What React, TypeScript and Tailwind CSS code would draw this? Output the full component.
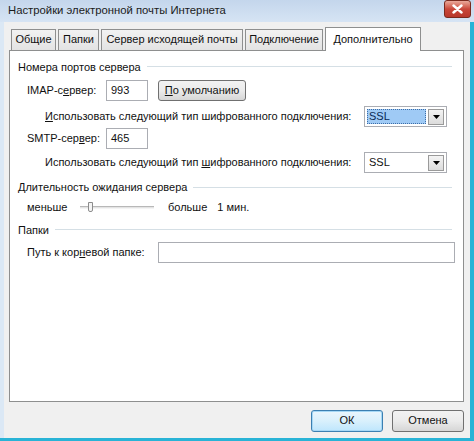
import React from 'react';

const tabs = [
  { t: 'Общие', w: 'w-[45px]' },
  { t: 'Папки', w: 'w-[41px]' },
  { t: 'Сервер исходящей почты', w: 'w-[142px]' },
  { t: 'Подключение', w: 'w-[78px]' },
];

const Legend = ({ children }: { children: React.ReactNode }) => (
  <div className="flex items-center gap-[6px] pr-[4px] whitespace-nowrap">
    <span>{children}</span>
    <div className="flex-1 h-px bg-[#d5dfe5]" />
  </div>
);

const Combo = ({ selected }: { selected?: boolean }) => (
  <div className="w-[83px] h-[21px] shrink-0 border border-[#abadb3] bg-white flex items-center p-[2px]">
    <div
      className={
        selected
          ? 'flex-1 h-full bg-[#9fcaf5] border border-dotted border-[#3d6ea8] pl-[1px] flex items-center text-[#0a2a55]'
          : 'flex-1 h-full pl-[2px] flex items-center'
      }
    >
      SSL
    </div>
    <div className="w-[16px] h-[16px] ml-[2px] border border-[#9a9a9a] bg-gradient-to-b from-[#f4f4f4] to-[#dcdcdc] flex items-center justify-center">
      <svg width="7" height="4" viewBox="0 0 7 4">
        <path d="M0 0h7L3.5 4z" fill="#000" />
      </svg>
    </div>
  </div>
);

const TextBox = ({ value, className }: { value?: string; className: string }) => (
  <div className={`h-[21px] shrink-0 border border-[#abadb3] bg-white flex items-center pl-[4px] ${className}`}>{value}</div>
);

export default function App() {
  return (
    <div
      className="w-[474px] h-[441px] bg-[#dbe8f5] overflow-hidden text-[11px] text-[#111] flex flex-col whitespace-nowrap"
      style={{ fontFamily: '"Segoe UI", "Liberation Sans", Arial, sans-serif' }}
    >
      {/* Title bar */}
      <div className="h-[25px] flex items-center justify-between pl-[8px] pr-[3px] bg-gradient-to-b from-[#c4d6ec] to-[#d6e4f4]">
        <span className="text-[11.3px] text-[#1b1b1b]">Настройки электронной почты Интернета</span>
        <div className="w-[27px] h-[18px] mt-[-4px] rounded-[3px] border border-[#7a2a1e] bg-gradient-to-b from-[#e9a99b] via-[#c9473a] to-[#b8382c] flex items-center justify-center">
          <svg width="11" height="10" viewBox="0 0 11 10">
            <path d="M1.5 1.5l8 7M9.5 1.5l-8 7" stroke="#fff" strokeWidth="2.4" strokeLinecap="round" />
          </svg>
        </div>
      </div>

      {/* Body */}
      <div className="flex-1 flex ml-[4px]">
        <div className="flex-1 bg-[#f0f0f0] flex flex-col pl-[5px] pr-[6px] pb-[6px]">
          {/* Tabs */}
          <div className="flex items-end h-[25px] pl-[2px] mt-[3px]">
            {tabs.map(({ t, w }) => (
              <div
                key={t}
                className={`h-[21px] ${w} shrink-0 mr-[2px] border border-b-0 border-[#8e8f8f] bg-gradient-to-b from-[#f2f2f2] to-[#e3e3e3] flex items-center justify-center`}
              >
                {t}
              </div>
            ))}
            <div className="h-[24px] w-[96px] shrink-0 border border-b-0 border-[#8e8f8f] bg-white flex items-center justify-center mb-[-1px] relative z-10">
              Дополнительно
            </div>
          </div>

          {/* Panel */}
          <div className="h-[352px] border border-[#8e8f8f] bg-white pl-[8px] pr-[7px] pt-[8px] flex flex-col">
            <Legend>Номера портов сервера</Legend>
            <div className="flex items-center mt-[5px] pl-[9px] h-[21px]">
              <span className="w-[79px] shrink-0">
                IMAP-с<u>е</u>рвер:
              </span>
              <TextBox value="993" className="w-[42px]" />
              <button className="ml-[10px] h-[21px] w-[88px] shrink-0 rounded-[3px] border border-[#707070] bg-gradient-to-b from-[#f2f2f2] via-[#ebebeb] to-[#d6d6d6]">
                <u>П</u>о умолчанию
              </button>
            </div>
            <div className="flex items-center mt-[5px] pl-[27px] h-[21px]">
              <span className="w-[319px] shrink-0">
                <u>И</u>спользовать следующий тип шифрованного подключения:
              </span>
              <Combo selected />
            </div>
            <div className="flex items-center mt-[1px] pl-[9px] h-[21px]">
              <span className="w-[79px] shrink-0">
                SMTP-сер<u>в</u>ер:
              </span>
              <TextBox value="465" className="w-[42px]" />
            </div>
            <div className="flex items-center mt-[3px] pl-[27px] h-[21px]">
              <span className="w-[319px] shrink-0">
                Использовать следующий тип <u>ш</u>ифрованного подключения:
              </span>
              <Combo />
            </div>

            <div className="mt-[6px]">
              <Legend>
                <u>Д</u>лительность ожидания сервера
              </Legend>
            </div>
            <div className="flex items-center mt-[2px] pl-[9px] h-[20px]">
              <span className="w-[53px] shrink-0">меньше</span>
              <div className="relative w-[74px] h-[14px] shrink-0 flex items-center">
                <div className="w-full h-[3px] border-t border-[#b8b8b8] border-b border-b-[#f4f4f4] bg-[#e4e4e4]" />
                <div className="absolute left-[8px] top-[1px] w-[5px] h-[10px] border border-[#8c8c8c] rounded-b-[2px] bg-[#f4f4f4]" />
              </div>
              <span className="ml-[14px]">больше</span>
              <span className="ml-[10px]">1 мин.</span>
            </div>

            <div className="mt-[4px]">
              <Legend>Папки</Legend>
            </div>
            <div className="flex items-center mt-[4px] pl-[9px] h-[21px]">
              <span className="w-[131px] shrink-0">
                Путь к кор<u>н</u>евой папке:
              </span>
              <TextBox className="w-[297px]" />
            </div>
          </div>

          {/* Buttons */}
          <div className="flex justify-end gap-[9px] mt-[8px]">
            <button className="w-[72px] h-[22px] rounded-[3px] border border-[#3c7fb1] bg-gradient-to-b from-[#eaf6fd] via-[#d9f0fc] to-[#bee6fd] shadow-[inset_0_0_0_1px_#a6d8f6]">
              ОК
            </button>
            <button className="w-[72px] h-[22px] rounded-[3px] border border-[#707070] bg-gradient-to-b from-[#f2f2f2] via-[#ebebeb] to-[#d6d6d6]">
              Отмена
            </button>
          </div>
        </div>
        <div className="w-[4px] bg-[#29b3d6]" />
      </div>
      <div className="h-[4px] bg-[#29b3d6]" />
    </div>
  );
}
